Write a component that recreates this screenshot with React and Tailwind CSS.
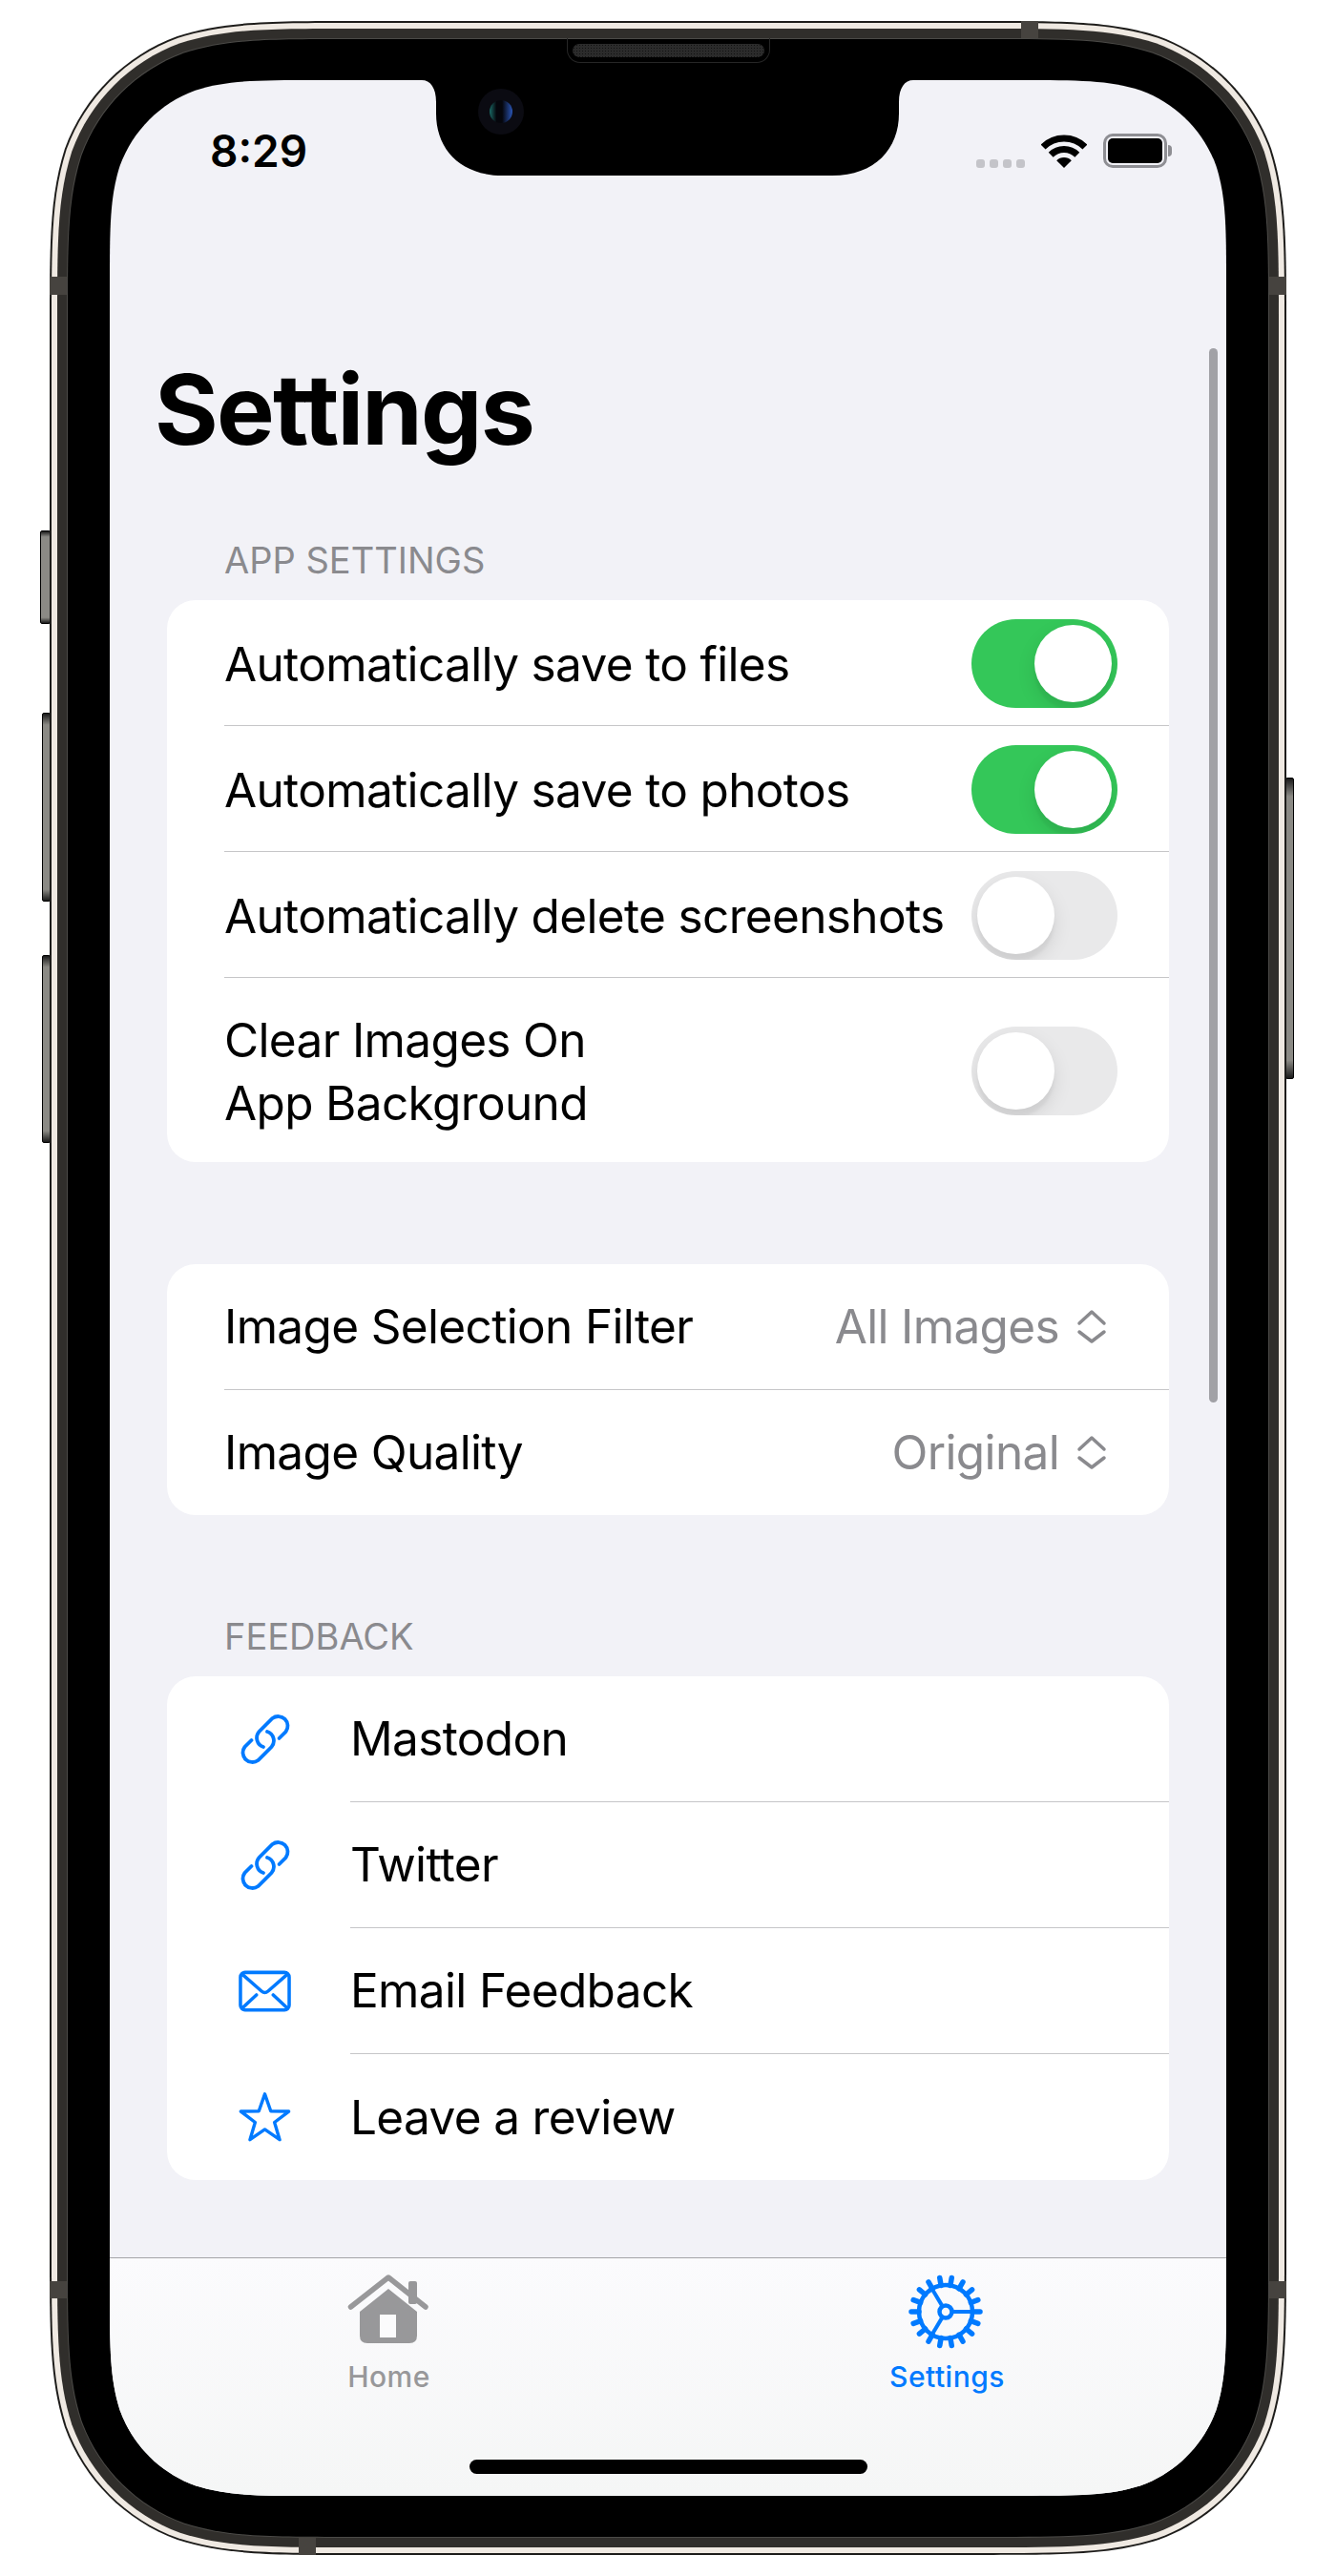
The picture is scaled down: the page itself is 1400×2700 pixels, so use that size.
const font = { fontFamily: 'Inter, sans-serif' }

// continuous corner outline, same curve iOS uses for the device and screen
function squircle(w, h, r) {
    const a = 1.528665 * r, b = 1.08849 * r, c = 0.86841 * r, d = 0.63149 * r
    const e = 0.37282 * r, f = 0.16906 * r, g = 0.07491 * r
    return `path('M${a} 0L${w - a} 0` +
        `C${w - b} 0 ${w - c} 0 ${w - d} ${g}C${w - e} ${f} ${w - f} ${e} ${w - g} ${d}C${w} ${c} ${w} ${b} ${w} ${a}` +
        `L${w} ${h - a}` +
        `C${w} ${h - b} ${w} ${h - c} ${w - g} ${h - d}C${w - f} ${h - e} ${w - e} ${h - f} ${w - d} ${h - g}C${w - c} ${h} ${w - b} ${h} ${w - a} ${h}` +
        `L${a} ${h}` +
        `C${b} ${h} ${c} ${h} ${d} ${h - g}C${e} ${h - f} ${f} ${h - e} ${g} ${h - d}C0 ${h - c} 0 ${h - b} 0 ${h - a}` +
        `L0 ${a}` +
        `C0 ${b} 0 ${c} ${g} ${d}C${f} ${e} ${e} ${f} ${d} ${g}C${c} 0 ${b} 0 ${a} 0Z')`
}

function Wifi() {
    return (
        <svg width="48" height="36" viewBox="0 0 48 36">
            <path d="M2.1 14.1A31 31 0 0 1 45.9 14.1" fill="none" stroke="#000" strokeWidth="7" />
            <path d="M10.2 22.2A19.5 19.5 0 0 1 37.8 22.2" fill="none" stroke="#000" strokeWidth="7" />
            <path d="M24 36L16.2 28.2A11 11 0 0 1 31.8 28.2Z" fill="#000" />
        </svg>
    )
}

function Toggle({ on }) {
    return (
        <div className={on ? 'flex h-[93px] w-[153px] shrink-0 items-center justify-end overflow-hidden rounded-full bg-[#34c759] px-[6px]' : 'flex h-[93px] w-[153px] shrink-0 items-center justify-start overflow-hidden rounded-full bg-[#e9e9ea] px-[6px]'}>
            <div className="h-[81px] w-[81px] rounded-full bg-white shadow-[0_8px_20px_rgba(0,0,0,0.1),0_8px_3px_rgba(0,0,0,0.04)]" />
        </div>
    )
}

function ToggleRow({ label, on, last }) {
    return (
        <div className="pl-[60px]">
            <div className={last ? 'flex h-[193px] items-center justify-between pr-[54px] pt-[2px]' : 'flex h-[132px] items-center justify-between border-b border-[#c6c6c8] pr-[54px] pt-[2px]'}>
                <div className="text-[49.5px] leading-[66px] tracking-[-0.65px] text-black">{label}</div>
                <Toggle on={on} />
            </div>
        </div>
    )
}

function Chevrons() {
    return (
        <svg width="32" height="38" viewBox="0 0 32 38" fill="none" stroke="#8a8a8e" strokeWidth="3.5" strokeLinecap="round" strokeLinejoin="round">
            <path d="M3 15L16 3L29 15" />
            <path d="M3 24L16 34L29 24" />
        </svg>
    )
}

function SelectRow({ label, value, last }) {
    return (
        <div className="pl-[60px]">
            <div className={last ? 'flex h-[131px] items-center justify-between pr-[65px]' : 'flex h-[132px] items-center justify-between border-b border-[#c6c6c8] pr-[65px]'}>
                <div className="text-[49.5px] tracking-[-0.65px] text-black">{label}</div>
                <div className="flex items-center gap-[18px]">
                    <span className="text-[49.5px] tracking-[-0.65px] text-[#8a8a8e]">{value}</span>
                    <Chevrons />
                </div>
            </div>
        </div>
    )
}

function LinkIcon() {
    return (
        <svg width="54" height="54" viewBox="0 0 54 54" fill="none" stroke="#007aff" strokeWidth="3.8" strokeLinecap="round">
            <path d="M41.5 26L48.5 19A10 10 0 0 0 34.5 5L20.5 19A10 10 0 0 0 25 35" />
            <path d="M12.5 28L5.5 35A10 10 0 0 0 19.5 49L33.5 35A10 10 0 0 0 29 19" />
        </svg>
    )
}

function MailIcon() {
    return (
        <svg width="56" height="44" viewBox="0 0 56 44" fill="none" stroke="#007aff" strokeWidth="3.6" strokeLinejoin="round" strokeLinecap="round">
            <rect x="2" y="2" width="52" height="40" rx="5" />
            <path d="M4 4L24.5 22Q28 25 31.5 22L52 4" />
            <path d="M4 40L19 26M52 40L37 26" />
        </svg>
    )
}

function StarIcon() {
    return (
        <svg width="58" height="56" viewBox="0 0 58 56" fill="none" stroke="#007aff" strokeWidth="3.6" strokeLinejoin="round">
            <path d="M29 2.5L35.6 21.4L55.5 21.7L39.7 33.8L45.4 53L29 41.6L12.6 53L18.3 33.8L2.5 21.7L22.4 21.4Z" />
        </svg>
    )
}

function LinkRow({ icon, label, last }) {
    return (
        <div className="flex">
            <div className="flex w-[192px] shrink-0 items-center pl-[75px]">
                <div className="flex w-[55px] items-center justify-center">{icon}</div>
            </div>
            <div className={last ? 'flex h-[132px] flex-1 items-center text-[49.5px] tracking-[-0.65px] text-black' : 'flex h-[132px] flex-1 items-center border-b border-[#c6c6c8] text-[49.5px] tracking-[-0.65px] text-black'}>
                {label}
            </div>
        </div>
    )
}

function HomeIcon() {
    return (
        <svg width="105" height="100" viewBox="0 0 105 100">
            <rect x="73" y="16" width="9" height="24" rx="2" fill="#98989a" />
            <path d="M12.5 43L52 12L91 43" fill="none" stroke="#98989a" strokeWidth="5.5" strokeLinecap="round" strokeLinejoin="round" />
            <path d="M22 48L52 24L82 48V73Q82 81 74 81H30Q22 81 22 73Z" fill="#98989a" />
            <rect x="43" y="51" width="17" height="24" fill="#fbfbfc" />
        </svg>
    )
}

function GearIcon() {
    const teeth = Array.from({ length: 18 }, (_, i) => (i * 2 * Math.PI) / 18)
    const spokes = [0, 2.11, -2.11]

    return (
        <svg width="105" height="100" viewBox="0 0 105 100" fill="none" stroke="#007aff">
            {teeth.map((a, i) => (
                <line key={i} x1={51 + 28 * Math.cos(a)} y1={48 + 28 * Math.sin(a)} x2={51 + 36 * Math.cos(a)} y2={48 + 36 * Math.sin(a)} strokeWidth="5.5" strokeLinecap="round" />
            ))}
            <circle cx="51" cy="48" r="28" strokeWidth="4.5" />
            <circle cx="51" cy="48" r="6.5" strokeWidth="4.5" />
            {spokes.map((a, i) => (
                <line key={i} x1={51 + 8 * Math.cos(a)} y1={48 + 8 * Math.sin(a)} x2={51 + 28 * Math.cos(a)} y2={48 + 28 * Math.sin(a)} strokeWidth="4" />
            ))}
        </svg>
    )
}

function Band({ className }) {
    return <div className={`absolute bg-[#46433f] ${className}`} />
}

function SideButton({ className }) {
    return (
        <div className={`absolute rounded-[2px] border border-black bg-[linear-gradient(to_bottom,#1a1a1a,#8b8a85_6%,#8b8a85_94%,#1a1a1a)] ${className}`} />
    )
}

export default function App() {
    return (
        <div className="h-[2700px] w-[1400px] bg-white pl-[52px] pt-[22px]" style={font}>
            <div className="relative h-[2656px] w-[1296px]">
                {/* side buttons */}
                <SideButton className="left-[-10px] top-[534px] h-[98px] w-[11px]" />
                <SideButton className="left-[-8px] top-[725px] h-[198px] w-[9px]" />
                <SideButton className="left-[-8px] top-[979px] h-[197px] w-[9px]" />
                <SideButton className="left-[1295px] top-[793px] h-[316px] w-[9px]" />

                {/* bezel */}
                <div className="relative h-full bg-[#1d1c1a] p-[2px]" style={{ clipPath: squircle(1296, 2656, 212) }}>
                    <div className="h-full bg-[#efe9e2] p-[6px]" style={{ clipPath: squircle(1292, 2652, 210) }}>
                        <div className="h-full bg-[#302e2b] p-[10px]" style={{ clipPath: squircle(1280, 2640, 204) }}>
                            <div className="h-full bg-[#4b4a47] p-px" style={{ clipPath: squircle(1260, 2620, 194) }}>
                                <div className="h-full bg-black px-[44px] py-[43px]" style={{ clipPath: squircle(1258, 2618, 193) }}>
                                    {/* screen */}
                                    <div className="relative flex h-[2532px] flex-col overflow-hidden bg-[#f2f2f7]" style={{ clipPath: squircle(1170, 2532, 142) }}>
                                        <div className="flex-1">
                                            {/* status bar */}
                                            <div className="flex h-[96px] items-end justify-between pl-[105px] pr-[57px]">
                                                <div className="flex h-[44px] items-center text-[46px] font-semibold leading-none text-black">8:29</div>
                                                <div className="flex h-[44px] items-center">
                                                    <div className="mr-[17px] mt-[26px] flex gap-[5px]">
                                                        <div className="h-[9px] w-[9px] rounded-[3px] bg-[#c4c4c9]" />
                                                        <div className="h-[9px] w-[9px] rounded-[3px] bg-[#c4c4c9]" />
                                                        <div className="h-[9px] w-[9px] rounded-[3px] bg-[#c4c4c9]" />
                                                        <div className="h-[9px] w-[9px] rounded-[3px] bg-[#c4c4c9]" />
                                                    </div>
                                                    <Wifi />
                                                    <div className="ml-[17px] flex items-center">
                                                        <div className="h-[36px] w-[67px] rounded-[10px] border-[3px] border-[#8e8e93] p-[2px]">
                                                            <div className="h-full w-full rounded-[5px] bg-black" />
                                                        </div>
                                                        <div className="ml-px h-[12px] w-[4px] rounded-r-full bg-[#8e8e93]" />
                                                    </div>
                                                </div>
                                            </div>

                                            <h1 className="ml-[47px] mt-[188px] text-[102px] font-bold leading-[122px] tracking-[-1.8px] text-black">Settings</h1>

                                            <div className="px-[60px]">
                                                <div className="ml-[60px] mt-[73px] text-[38px] leading-[48px] text-[#8a8a8e]">APP SETTINGS</div>
                                                <div className="mt-[18px] overflow-hidden rounded-[30px] bg-white">
                                                    <ToggleRow label="Automatically save to files" on />
                                                    <ToggleRow label="Automatically save to photos" on />
                                                    <ToggleRow label="Automatically delete screenshots" />
                                                    <ToggleRow label={<>Clear Images On<br />App Background</>} last />
                                                </div>

                                                <div className="mt-[107px] overflow-hidden rounded-[30px] bg-white">
                                                    <SelectRow label="Image Selection Filter" value="All Images" />
                                                    <SelectRow label="Image Quality" value="Original" last />
                                                </div>

                                                <div className="ml-[60px] mt-[103px] text-[38px] leading-[48px] text-[#8a8a8e]">FEEDBACK</div>
                                                <div className="mt-[18px] overflow-hidden rounded-[30px] bg-white">
                                                    <LinkRow icon={<LinkIcon />} label="Mastodon" />
                                                    <LinkRow icon={<LinkIcon />} label="Twitter" />
                                                    <LinkRow icon={<MailIcon />} label="Email Feedback" />
                                                    <LinkRow icon={<StarIcon />} label="Leave a review" last />
                                                </div>
                                            </div>
                                        </div>

                                        {/* tab bar */}
                                        <div className="h-[250px] shrink-0 border-t border-[#a5a5a8] bg-gradient-to-b from-[#fbfbfd] to-[#f5f6f6]">
                                            <div className="grid grid-cols-2 pt-[8px]">
                                                <div className="flex flex-col items-center">
                                                    <HomeIcon />
                                                    <div className="-mt-[2px] text-[30px] font-medium leading-[36px] tracking-[0.5px] text-[#98989a]">Home</div>
                                                </div>
                                                <div className="flex flex-col items-center">
                                                    <GearIcon />
                                                    <div className="-mt-[2px] text-[30px] font-medium leading-[36px] tracking-[0.5px] text-[#007aff]">Settings</div>
                                                </div>
                                            </div>
                                            <div className="mx-auto mt-[69px] h-[15px] w-[417px] rounded-full bg-black" />
                                        </div>

                                        {/* scroll indicator */}
                                        <div className="absolute left-[1152px] top-[281px] h-[1105px] w-[9px] rounded-full bg-[#a1a1a6]" />

                                        {/* notch */}
                                        <svg className="absolute left-[327px] top-0" width="515" height="100" viewBox="0 0 515 100">
                                            <path d="M0 0H515C506 0 500 8 500 23V35C500 72 475 100 430 100H85C40 100 15 72 15 35V23C15 8 9 0 0 0Z" fill="#000" />
                                        </svg>
                                    </div>
                                </div>
                            </div>
                        </div>
                    </div>
                </div>

                {/* antenna bands */}
                <Band className="left-[1018px] top-0 h-[18px] w-[18px]" />
                <Band className="left-0 top-[268px] h-[19px] w-[18px]" />
                <Band className="right-0 top-[268px] h-[19px] w-[18px]" />
                <Band className="left-0 top-[2369px] h-[18px] w-[18px]" />
                <Band className="right-0 top-[2369px] h-[18px] w-[18px]" />
                <Band className="bottom-0 left-[261px] h-[18px] w-[18px]" />

                {/* speaker */}
                <div className="absolute left-[542px] top-[18px] h-[26px] w-[213px] rounded-b-[14px] border border-t-0 border-[#262626] px-[5px] pt-[6px]">
                    <div className="h-[14px] rounded-full bg-[#2b2b2b] bg-[radial-gradient(#111_1px,transparent_1px)] bg-[length:3px_3px]" />
                </div>

                {/* camera */}
                <div className="absolute left-[449px] top-[71px] flex h-[48px] w-[48px] items-center justify-center rounded-full bg-[#0b0b12]">
                    <div className="h-[24px] w-[24px] rounded-full bg-[linear-gradient(to_right,#1a6a66,#05060c_30%,#05060c_55%,#2a55b5)]" />
                </div>
            </div>
        </div>
    )
}
